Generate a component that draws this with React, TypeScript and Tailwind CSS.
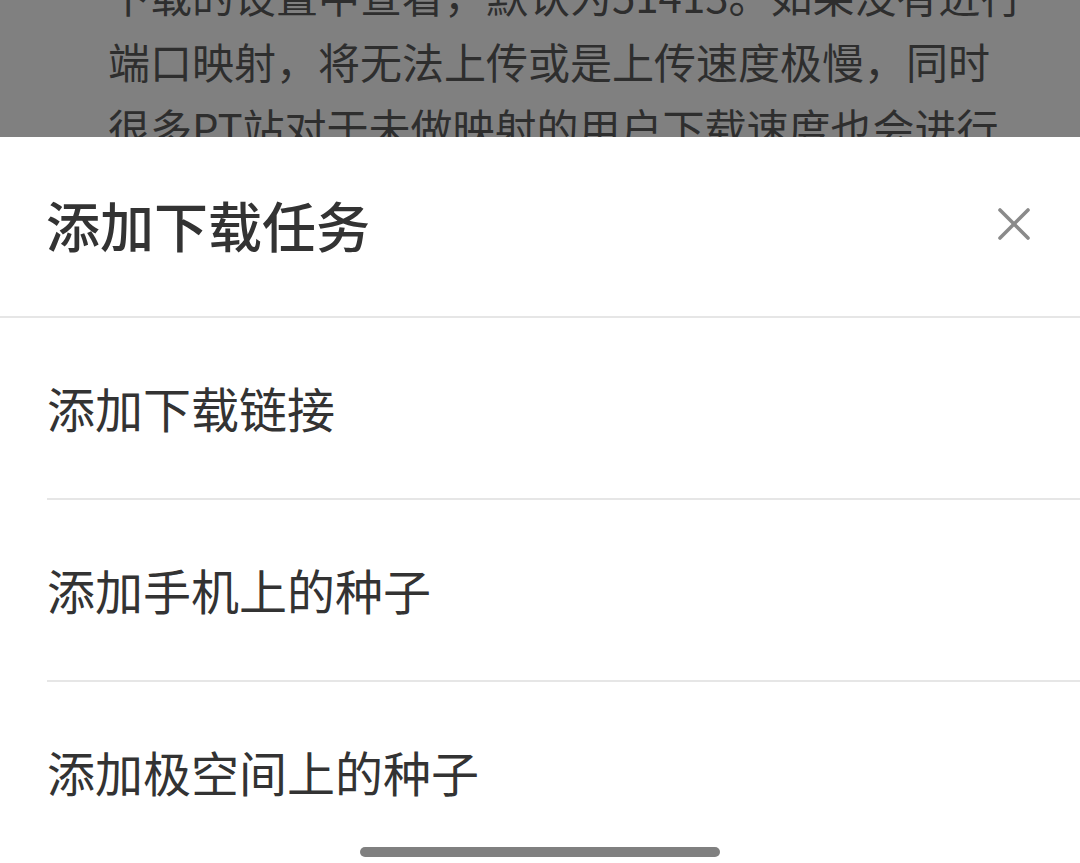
import React from "react";

const font = { fontFamily: '"Noto Sans CJK SC", "Noto Sans", sans-serif' };

export default function App() {
  const items = ["添加下载链接", "添加手机上的种子", "添加极空间上的种子"];
  return (
    <div className="relative w-[1080px] h-[863px] overflow-hidden bg-[#808080]" style={font}>
      <div className="h-[137px] overflow-hidden pl-[108px]">
        <div className="-mt-[38px] text-[42px] leading-[66px] text-[#2e2e2e] whitespace-nowrap">
          <div>下载的设置中查看，默认为51413。如果没有进行</div>
          <div>端口映射，将无法上传或是上传速度极慢，同时</div>
          <div>很多PT站对于未做映射的用户下载速度也会进行</div>
        </div>
      </div>
      <div className="bg-white h-[726px] flex flex-col">
        <div className="h-[181px] flex items-center justify-between pl-[46px] pr-[50px] border-b-2 border-[#e6e6e6]">
          <span className="text-[54px] font-medium text-[#333333] leading-none -mt-[4px]">添加下载任务</span>
          <svg width="32" height="32" viewBox="0 0 32 32" className="-mt-[6px]">
            <line x1="2" y1="2" x2="30" y2="30" stroke="#8a8a8a" strokeWidth="3.6" strokeLinecap="round" />
            <line x1="30" y1="2" x2="2" y2="30" stroke="#8a8a8a" strokeWidth="3.6" strokeLinecap="round" />
          </svg>
        </div>
        <div className="pl-[47px] flex flex-col">
          {items.map((t, i) => (
            <div
              key={t}
              className={
                i < items.length - 1
                  ? "h-[182px] flex items-center border-b-2 border-[#e6e6e6]"
                  : "h-[180px] flex items-center"
              }
            >
              <span className="text-[48px] text-[#333333] leading-none -mt-[2px]">{t}</span>
            </div>
          ))}
        </div>
      </div>
      <div className="absolute left-[360px] bottom-[6px] w-[360px] h-[10px] rounded-full bg-[#808080]" />
    </div>
  );
}
